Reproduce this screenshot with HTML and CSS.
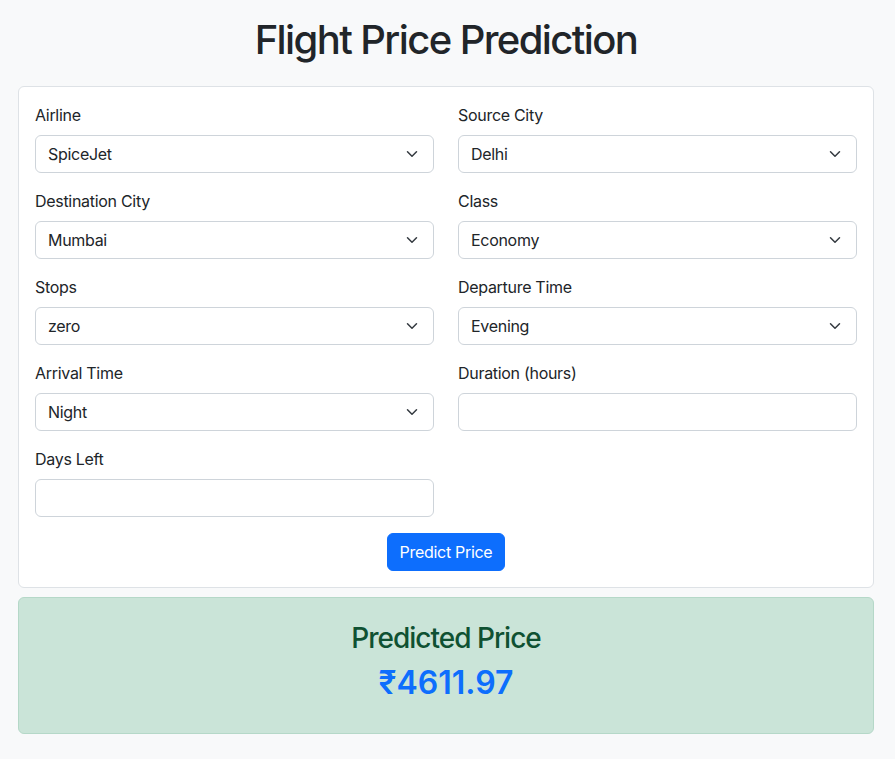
FILE: index.html
```html
<!DOCTYPE html>
<html lang="en">
<head>
<meta charset="utf-8">
<title>Flight Price Prediction</title>
<link rel="stylesheet" href="styles.css">
</head>
<body>
<div class="page">
  <h1 class="title">Flight Price Prediction</h1>
  <form class="card">
    <div class="grid">
      <div class="field">
        <label>Airline</label>
        <div class="select"><span>SpiceJet</span><svg viewBox="0 0 16 16" width="16" height="16"><path d="M2 5l6 6 6-6" fill="none" stroke="#343a40" stroke-width="2" stroke-linecap="round" stroke-linejoin="round"/></svg></div>
      </div>
      <div class="field">
        <label>Source City</label>
        <div class="select"><span>Delhi</span><svg viewBox="0 0 16 16" width="16" height="16"><path d="M2 5l6 6 6-6" fill="none" stroke="#343a40" stroke-width="2" stroke-linecap="round" stroke-linejoin="round"/></svg></div>
      </div>
      <div class="field">
        <label>Destination City</label>
        <div class="select"><span>Mumbai</span><svg viewBox="0 0 16 16" width="16" height="16"><path d="M2 5l6 6 6-6" fill="none" stroke="#343a40" stroke-width="2" stroke-linecap="round" stroke-linejoin="round"/></svg></div>
      </div>
      <div class="field">
        <label>Class</label>
        <div class="select"><span>Economy</span><svg viewBox="0 0 16 16" width="16" height="16"><path d="M2 5l6 6 6-6" fill="none" stroke="#343a40" stroke-width="2" stroke-linecap="round" stroke-linejoin="round"/></svg></div>
      </div>
      <div class="field">
        <label>Stops</label>
        <div class="select"><span>zero</span><svg viewBox="0 0 16 16" width="16" height="16"><path d="M2 5l6 6 6-6" fill="none" stroke="#343a40" stroke-width="2" stroke-linecap="round" stroke-linejoin="round"/></svg></div>
      </div>
      <div class="field">
        <label>Departure Time</label>
        <div class="select"><span>Evening</span><svg viewBox="0 0 16 16" width="16" height="16"><path d="M2 5l6 6 6-6" fill="none" stroke="#343a40" stroke-width="2" stroke-linecap="round" stroke-linejoin="round"/></svg></div>
      </div>
      <div class="field">
        <label>Arrival Time</label>
        <div class="select"><span>Night</span><svg viewBox="0 0 16 16" width="16" height="16"><path d="M2 5l6 6 6-6" fill="none" stroke="#343a40" stroke-width="2" stroke-linecap="round" stroke-linejoin="round"/></svg></div>
      </div>
      <div class="field">
        <label>Duration (hours)</label>
        <div class="input"></div>
      </div>
      <div class="field">
        <label>Days Left</label>
        <div class="input"></div>
      </div>
    </div>
    <div class="actions">
      <button type="button" class="btn">Predict Price</button>
    </div>
  </form>
  <div class="result">
    <h3 class="result-title">Predicted Price</h3>
    <h2 class="result-price">₹4611.97</h2>
  </div>
</div>
</body>
</html>
```
FILE: styles.css
```css
* { box-sizing: border-box; }
html, body { margin: 0; padding: 0; }
body {
  background: #f8f9fa;
  font-family: Inter, "Noto Sans", "Liberation Sans", sans-serif;
  font-size: 16px;
  line-height: 1.5;
  color: #212529;
  letter-spacing: -0.3px;
}
.page {
  padding: 16px 21px 0 18px;
}
.title {
  margin: 0 0 22px;
  font-size: 40px;
  line-height: 48px;
  font-weight: 500;
  text-align: center;
  letter-spacing: -1.6px;
}
.card {
  background: #fff;
  border: 1px solid #dee2e6;
  border-radius: 6px;
  padding: 16px;
}
.grid {
  display: grid;
  grid-template-columns: 1fr 1fr;
  column-gap: 24px;
}
.field {
  margin-bottom: 16px;
}
.field label {
  display: block;
  margin-bottom: 8px;
  line-height: 24px;
}
.select, .input {
  height: 38px;
  border: 1px solid #ced4da;
  border-radius: 6px;
  background: #fff;
  display: flex;
  align-items: center;
  justify-content: space-between;
  padding: 0 12px;
}
.select svg { width: 12px; height: 12px; margin-right: 3px; }
.actions {
  display: flex;
  justify-content: center;
}
.btn {
  font: inherit;
  letter-spacing: -0.3px;
  color: #fff;
  background: #0d6efd;
  border: 1px solid #0d6efd;
  border-radius: 6px;
  padding: 6px 12px;
  line-height: 24px;
}
.result {
  margin-top: 9px;
  background: #cae4d8;
  border: 1px solid #b5d8c8;
  border-radius: 6px;
  padding: 24px 16px 31px;
  text-align: center;
}
.result-title {
  margin: 0 0 8px;
  font-size: 28px;
  line-height: 33.6px;
  font-weight: 500;
  color: #0f5132;
  letter-spacing: -1px;
}
.result-price {
  margin: 0;
  font-size: 32px;
  line-height: 38.4px;
  font-weight: 600;
  color: #0d6efd;
  letter-spacing: 0;
}
```
